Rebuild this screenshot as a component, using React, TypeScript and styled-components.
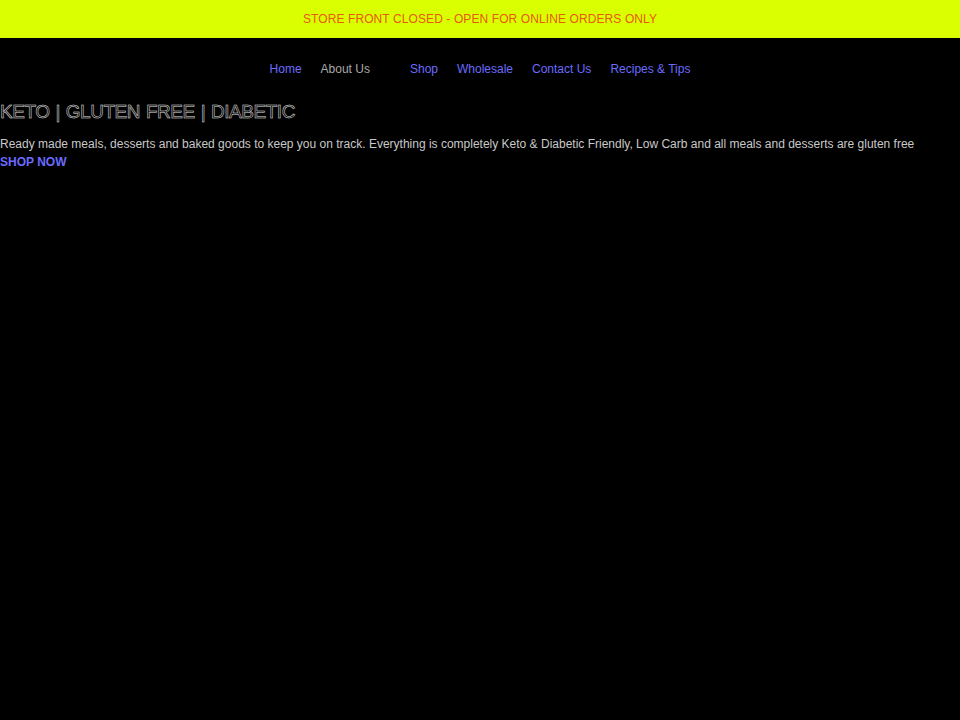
import React from "react";
import styled, { createGlobalStyle } from "styled-components";

const Global = createGlobalStyle`
  html, body { margin: 0; padding: 0; background: #000; }
  body { font-family: "Liberation Sans", Arial, sans-serif; }
`;

const Page = styled.div`
  min-height: 720px;
  background: #000;
  display: flex;
  flex-direction: column;
`;

const Announcement = styled.div`
  height: 38px;
  background: #d9ff00;
  display: flex;
  align-items: center;
  justify-content: center;
  color: #e8590c;
  font-size: 12px;
  letter-spacing: 0.1px;
`;

const Nav = styled.nav`
  display: flex;
  justify-content: center;
  align-items: center;
  padding-top: 24px;
  height: 14px;
  gap: 19px;
`;

const NavLink = styled.a<{ $muted?: boolean; $extra?: number }>`
  color: ${(p) => (p.$muted ? "#a8a8a8" : "#6b6bff")};
  font-size: 12px;
  text-decoration: none;
  margin-right: ${(p) => p.$extra ?? 0}px;
  cursor: pointer;
`;

const Hero = styled.section`
  display: flex;
  flex-direction: column;
  padding-top: 24px;
`;

const Heading = styled.h1`
  margin: 0;
  font-size: 19px;
  font-weight: 400;
  letter-spacing: -0.45px;
  word-spacing: 1px;
  color: transparent;
  -webkit-text-stroke: 0.5px #e0e0e0;
  line-height: 24px;
`;

const Lead = styled.p`
  margin: 13px 0 0;
  font-size: 12px;
  color: #c8c8c8;
  line-height: 14px;
  letter-spacing: 0;
`;

const Cta = styled.a`
  margin-top: 4px;
  font-size: 12px;
  font-weight: 700;
  color: #6b6bff;
  text-decoration: none;
  line-height: 14px;
`;

export default function App() {
  return (
    <>
      <Global />
      <Page>
        <Announcement>STORE FRONT CLOSED - OPEN FOR ONLINE ORDERS ONLY</Announcement>
        <Nav>
          <NavLink>Home</NavLink>
          <NavLink $muted $extra={21}>About Us</NavLink>
          <NavLink>Shop</NavLink>
          <NavLink>Wholesale</NavLink>
          <NavLink>Contact Us</NavLink>
          <NavLink>Recipes &amp; Tips</NavLink>
        </Nav>
        <Hero>
          <Heading>KETO | GLUTEN FREE | DIABETIC</Heading>
          <Lead>
            Ready made meals, desserts and baked goods to keep you on track. Everything is completely Keto &amp; Diabetic Friendly, Low Carb and all meals and desserts are gluten free
          </Lead>
          <Cta>SHOP NOW</Cta>
        </Hero>
      </Page>
    </>
  );
}
